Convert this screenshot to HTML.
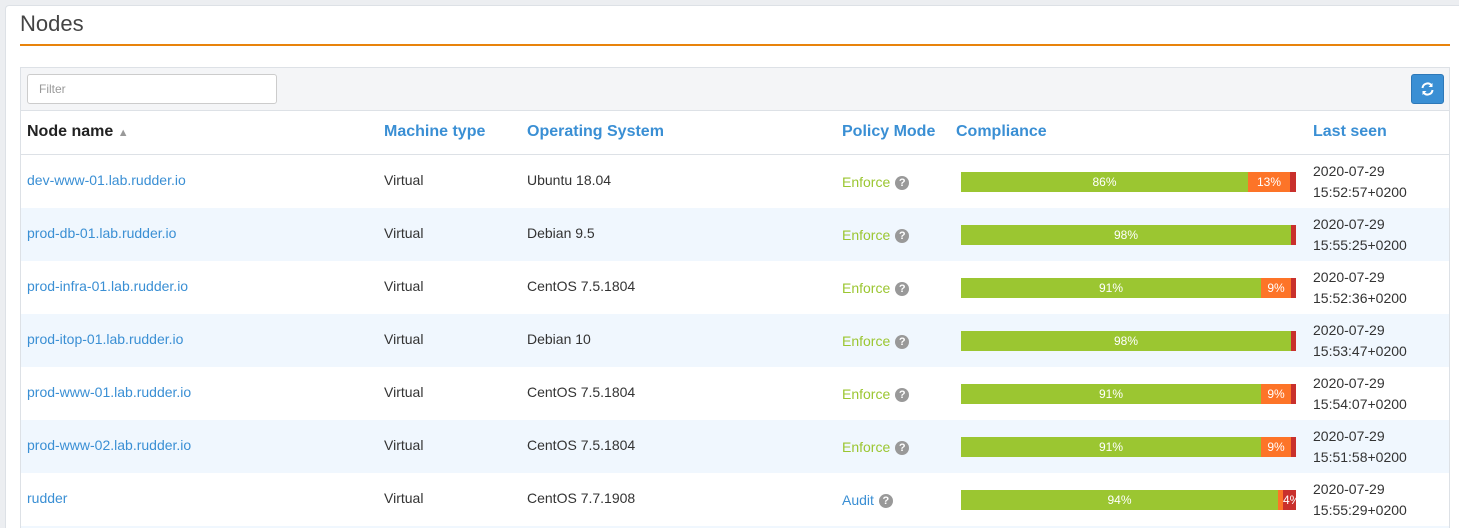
<!DOCTYPE html>
<html style="overflow:hidden;width:1459px;height:528px"><head><style>
*{box-sizing:border-box;margin:0;padding:0}
html,body{width:1459px;height:528px;overflow:hidden}
body{background:#eceef1;font-family:"Liberation Sans",sans-serif;font-size:14px;color:#333;position:relative}
.card{position:absolute;left:5px;top:5px;width:1454px;height:523px;background:#fff;border:1px solid #dde1e6;border-bottom:none;border-right:none;border-radius:4px 0 0 0}
.title{position:absolute;left:20px;top:11px;font-size:22px;color:#444}
.hr{position:absolute;left:20px;top:44px;width:1430px;height:2px;background:#e8830c}
.tbl{position:absolute;left:20px;top:67px;width:1430px;height:461px;border:1px solid #dde1e6;border-bottom:none;background:#fff;overflow:hidden}
.bar{position:absolute;left:0;top:0;width:1428px;height:43px;background:#f4f5f7;border-bottom:1px solid #dde1e6}
.filter{position:absolute;left:6px;top:6px;width:250px;height:30px;border:1px solid #ccc;border-radius:3px;background:#fff;font-size:12px;color:#999;padding:7px 11px}
.btn{position:absolute;left:1390px;top:6px;width:33px;height:30px;background:#3a8fd4;border:1px solid #2d78b8;border-radius:3px}
.th{position:absolute;top:55px;font-weight:bold;font-size:16px;color:#3a8fd4}
.hline{position:absolute;left:0;top:86px;width:1428px;height:1px;background:#dde1e6}
.row{position:absolute;left:0;width:1428px;height:53px}
.row.alt{background:#f0f7fe}
.c{position:absolute;top:17px;font-size:14px}
.lnk{color:#3a8fd4}
.pm{position:absolute;top:19px;font-size:14px;color:#9bc631}
.q{display:inline-block;width:14px;height:14px;border-radius:50%;background:#999;color:#fff;font-size:11px;font-weight:bold;text-align:center;line-height:14px;vertical-align:1px;margin-left:5px}
.cb{position:absolute;left:940px;top:17px;width:335px;height:20px;display:flex;font-size:12px;color:#fff;line-height:20px;text-align:center}
.g{background:#9bc631}.o{background:#fd7428}.r{background:#c9302c}
.ls{position:absolute;left:1292px;top:6px;font-size:14px;line-height:21px;color:#333}
</style></head><body>
<div class="card"></div>
<div class="title">Nodes</div>
<div class="hr"></div>
<div class="tbl">
<div class="bar"><div class="filter">Filter</div><div class="btn"><svg width="31" height="28" viewBox="0 0 31 28"><path d="M10.5 13a5 5 0 0 1 9-2.5M20.5 15a5 5 0 0 1-9 2.5" stroke="#fff" stroke-width="2" fill="none"/><path d="M20.5 8v4h-4zM10.5 20v-4h4z" fill="#fff"/></svg></div></div>
<div class="th" style="left:6px;color:#222">Node name <span style="font-size:11px;color:#999">▲</span></div>
<div class="th" style="left:363px">Machine type</div>
<div class="th" style="left:506px">Operating System</div>
<div class="th" style="left:821px">Policy Mode</div>
<div class="th" style="left:935px">Compliance</div>
<div class="th" style="left:1292px">Last seen</div>
<div class="hline"></div>

<div class="row" style="top:87px"><div class="c lnk" style="left:6px">dev-www-01.lab.rudder.io</div><div class="c" style="left:363px">Virtual</div><div class="c" style="left:506px">Ubuntu 18.04</div><div class="pm" style="left:821px">Enforce<span class="q">?</span></div><div class="cb"><div class="g" style="width:287px">86%</div><div class="o" style="width:42px">13%</div><div class="r" style="width:6px"></div></div><div class="ls">2020-07-29<br>15:52:57+0200</div></div>
<div class="row alt" style="top:140px"><div class="c lnk" style="left:6px">prod-db-01.lab.rudder.io</div><div class="c" style="left:363px">Virtual</div><div class="c" style="left:506px">Debian 9.5</div><div class="pm" style="left:821px">Enforce<span class="q">?</span></div><div class="cb"><div class="g" style="width:330px">98%</div><div class="r" style="width:5px"></div></div><div class="ls">2020-07-29<br>15:55:25+0200</div></div>
<div class="row" style="top:193px"><div class="c lnk" style="left:6px">prod-infra-01.lab.rudder.io</div><div class="c" style="left:363px">Virtual</div><div class="c" style="left:506px">CentOS 7.5.1804</div><div class="pm" style="left:821px">Enforce<span class="q">?</span></div><div class="cb"><div class="g" style="width:300px">91%</div><div class="o" style="width:30px">9%</div><div class="r" style="width:5px"></div></div><div class="ls">2020-07-29<br>15:52:36+0200</div></div>
<div class="row alt" style="top:246px"><div class="c lnk" style="left:6px">prod-itop-01.lab.rudder.io</div><div class="c" style="left:363px">Virtual</div><div class="c" style="left:506px">Debian 10</div><div class="pm" style="left:821px">Enforce<span class="q">?</span></div><div class="cb"><div class="g" style="width:330px">98%</div><div class="r" style="width:5px"></div></div><div class="ls">2020-07-29<br>15:53:47+0200</div></div>
<div class="row" style="top:299px"><div class="c lnk" style="left:6px">prod-www-01.lab.rudder.io</div><div class="c" style="left:363px">Virtual</div><div class="c" style="left:506px">CentOS 7.5.1804</div><div class="pm" style="left:821px">Enforce<span class="q">?</span></div><div class="cb"><div class="g" style="width:300px">91%</div><div class="o" style="width:30px">9%</div><div class="r" style="width:5px"></div></div><div class="ls">2020-07-29<br>15:54:07+0200</div></div>
<div class="row alt" style="top:352px"><div class="c lnk" style="left:6px">prod-www-02.lab.rudder.io</div><div class="c" style="left:363px">Virtual</div><div class="c" style="left:506px">CentOS 7.5.1804</div><div class="pm" style="left:821px">Enforce<span class="q">?</span></div><div class="cb"><div class="g" style="width:300px">91%</div><div class="o" style="width:30px">9%</div><div class="r" style="width:5px"></div></div><div class="ls">2020-07-29<br>15:51:58+0200</div></div>
<div class="row" style="top:405px;height:56px"><div class="c lnk" style="left:6px">rudder</div><div class="c" style="left:363px">Virtual</div><div class="c" style="left:506px">CentOS 7.7.1908</div><div class="pm" style="left:821px;color:#3a8fd4">Audit<span class="q">?</span></div><div class="cb"><div class="g" style="width:317px">94%</div><div class="o" style="width:5px"></div><div class="r" style="width:13px;overflow:hidden">4%</div></div><div class="ls">2020-07-29<br>15:55:29+0200</div></div>
<div style="position:absolute;left:0;top:458px;width:1428px;height:3px;background:#f0f7fe"></div>
</div>
</body></html>
